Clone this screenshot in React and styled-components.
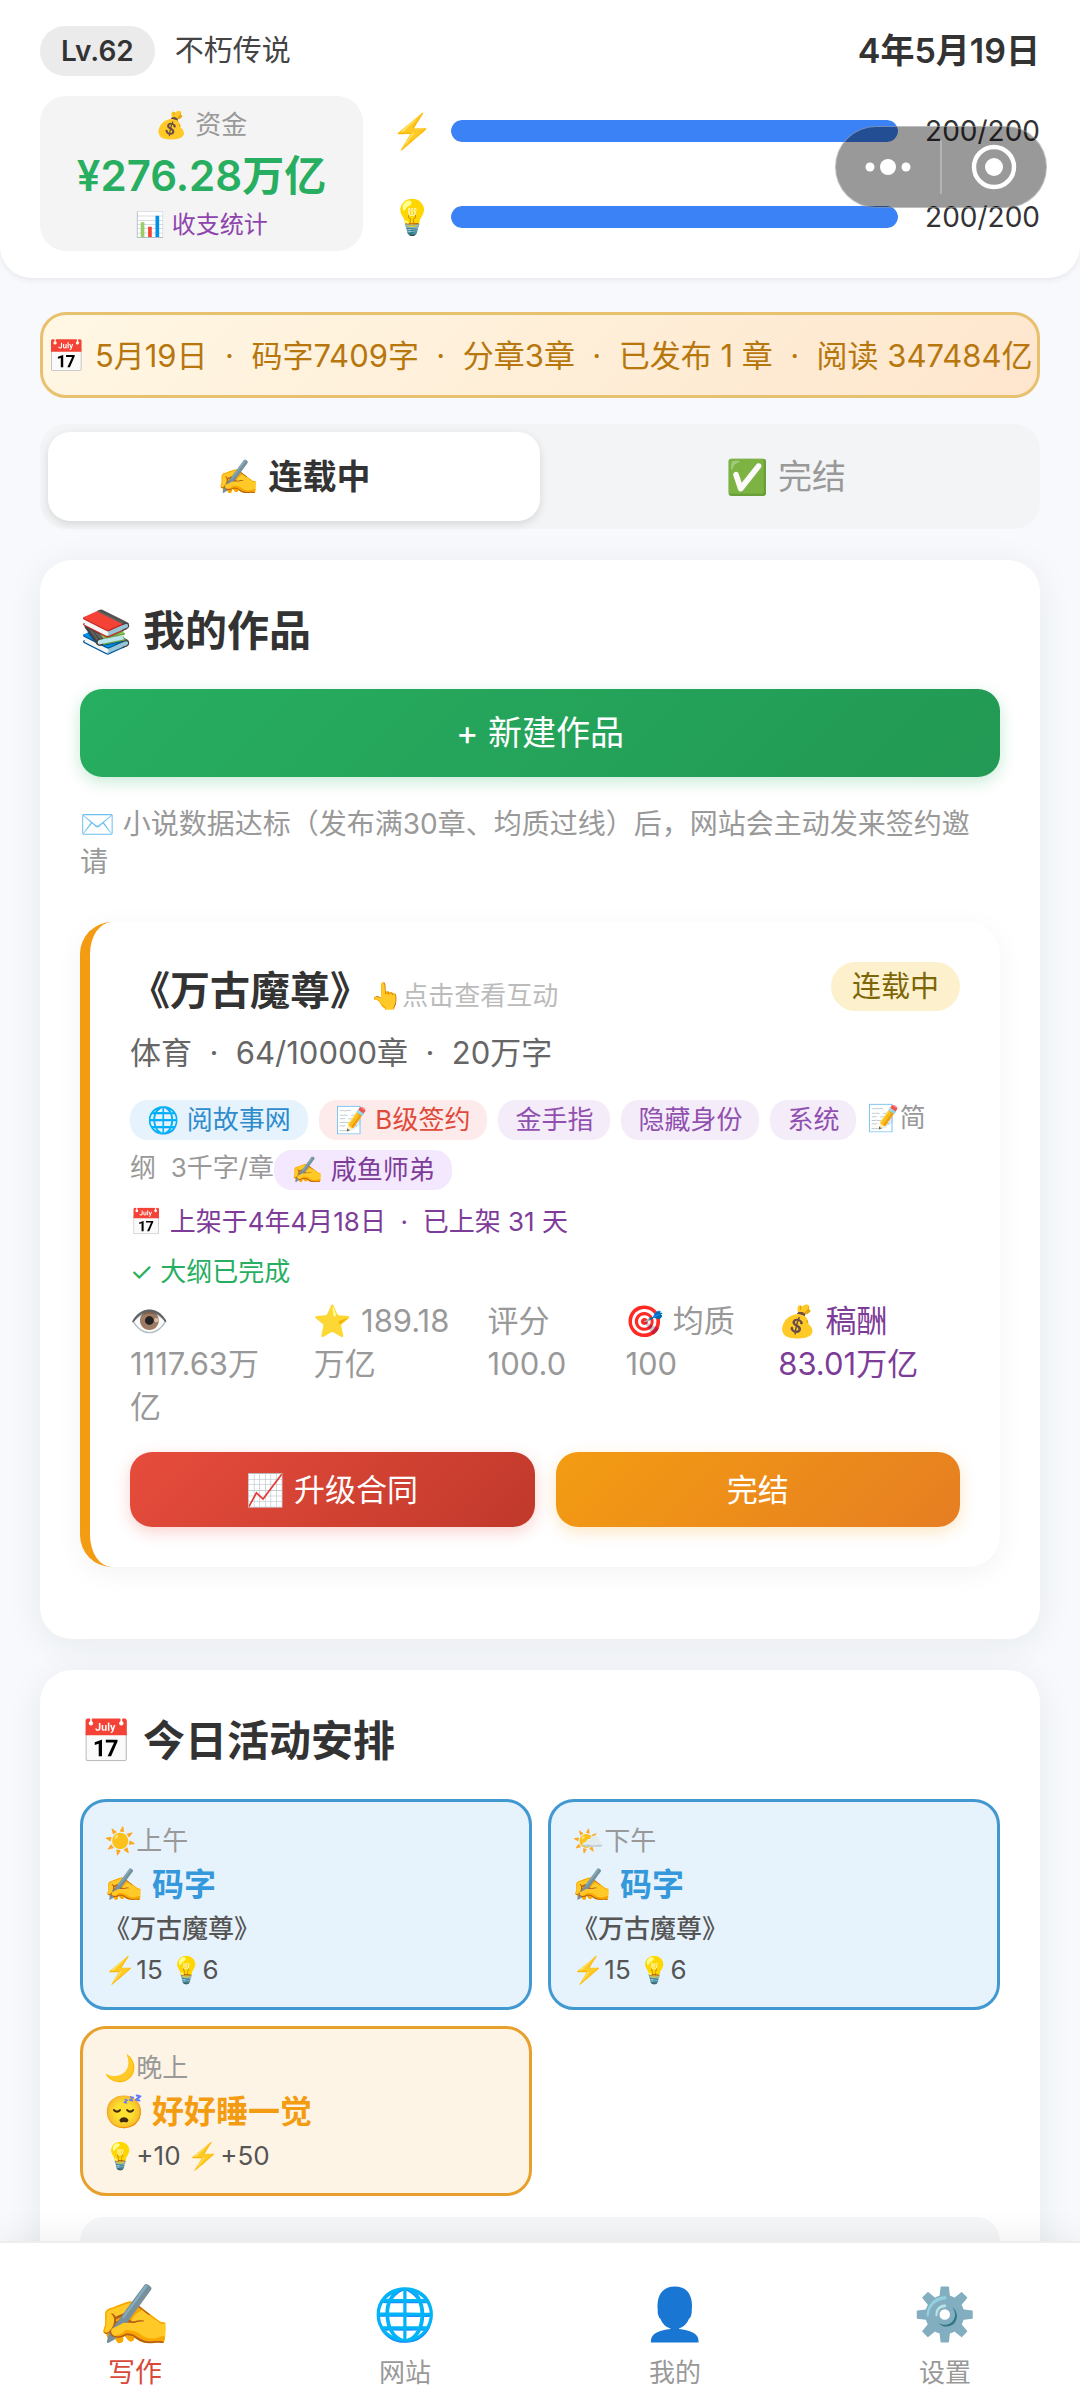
import React, { useState } from 'react';
import styled, { createGlobalStyle, css } from 'styled-components';

const GlobalStyle = createGlobalStyle`
  *, *::before, *::after { box-sizing: border-box; }
  body {
    margin: 0;
    background: #f7f9fc;
    color: #333;
    font-family: Inter, "Noto Sans CJK SC", "Noto Color Emoji", sans-serif;
  }
  button { font-family: inherit; border: 0; padding: 0; background: none; cursor: pointer; }
  h2, h3, p, ul { margin: 0; padding: 0; }
`;

const Shell = styled.div`
  display: flex;
  flex-direction: column;
  height: 100vh;
  overflow: hidden;
`;

/* ---------- header ---------- */
const Header = styled.header`
  flex: none;
  display: flex;
  flex-direction: column;
  gap: 20px;
  padding: 26px 40px 27px;
  background: #fff;
  border-radius: 0 0 32px 32px;
  box-shadow: 0 2px 6px rgba(0, 0, 0, 0.07);
`;
const HeaderRow = styled.div`
  display: flex;
  align-items: center;
`;
const Level = styled.span`
  padding: 0 21px;
  border-radius: 25px;
  background: #ebebeb;
  font-size: 28px;
  line-height: 50px;
  font-weight: 600;
`;
const Rank = styled.span`
  margin-left: 20px;
  font-size: 29px;
  line-height: 50px;
  color: #444;
`;
const Today = styled.time`
  margin-left: auto;
  font-size: 34px;
  line-height: 50px;
  font-weight: 600;
`;
const HeaderStats = styled.div`
  display: flex;
  gap: 28px;
`;
const Funds = styled.div`
  flex: none;
  display: flex;
  flex-direction: column;
  align-items: center;
  justify-content: center;
  width: 323px;
  height: 155px;
  border-radius: 26px;
  background: #f4f4f4;
`;
const FundsLabel = styled.span`
  font-size: 26px;
  line-height: 42px;
  color: #999;
`;
const FundsValue = styled.strong`
  font-size: 42px;
  line-height: 60px;
  font-weight: 600;
  color: #27ae60;
`;
const FundsLink = styled.button`
  font-size: 24px;
  line-height: 38px;
  color: #8e44ad;
`;
const Meters = styled.div`
  flex: 1;
  display: flex;
  flex-direction: column;
  justify-content: space-between;
  padding: 13px 0 12px;
`;
const MeterRow = styled.div`
  display: flex;
  align-items: center;
  height: 44px;
`;
const MeterIcon = styled.span`
  width: 60px;
  font-size: 34px;
  line-height: 44px;
`;
const Track = styled.div`
  flex: 1;
  height: 22px;
  border-radius: 11px;
  background: #eee;
  overflow: hidden;
`;
const Fill = styled.div`
  height: 100%;
  border-radius: 11px;
  background: #3b82f6;
`;
const MeterValue = styled.span`
  width: 142px;
  text-align: right;
  font-size: 28px;
  line-height: 44px;
`;

/* ---------- floating host menu ---------- */
const Capsule = styled.div`
  position: fixed;
  top: 126px;
  right: 33px;
  z-index: 5;
  display: flex;
  align-items: center;
  width: 212px;
  height: 82px;
  border: 1px solid rgba(255, 255, 255, 0.35);
  border-radius: 41px;
  background: rgba(0, 0, 0, 0.4);
`;
const CapsuleButton = styled.button`
  flex: 1;
  display: flex;
  align-items: center;
  justify-content: center;
  height: 100%;
`;
const CapsuleRule = styled.span`
  width: 2px;
  height: 54px;
  background: rgba(255, 255, 255, 0.25);
`;

/* ---------- body ---------- */
const Main = styled.main`
  flex: 1;
  min-height: 0;
  overflow: hidden;
  padding: 34px 40px 0;
`;
const Banner = styled.p`
  display: flex;
  align-items: center;
  justify-content: center;
  height: 86px;
  padding-bottom: 4px;
  border: 3px solid #e8c16f;
  border-radius: 26px;
  background: linear-gradient(135deg, #fff7e4, #fee6cd);
  color: #b7770d;
  font-size: 31px;
  white-space: pre;
`;
const Tabs = styled.div`
  display: flex;
  margin-top: 26px;
  padding: 8px;
  border-radius: 26px;
  background: #f3f4f5;
`;
const Tab = styled.button`
  flex: 1;
  border-radius: 22px;
  font-size: 34px;
  line-height: 89px;
  color: ${(p) => (p.$active ? '#333' : '#999')};
  font-weight: ${(p) => (p.$active ? 600 : 400)};
  ${(p) => p.$active && css`
    background: #fff;
    box-shadow: 0 3px 8px rgba(0, 0, 0, 0.12);
  `}
`;
const Card = styled.section`
  margin-top: 31px;
  padding: 40px;
  border-radius: 32px;
  background: #fff;
  box-shadow: 0 6px 36px rgba(30, 40, 60, 0.07);
`;
const CardTitle = styled.h2`
  margin-bottom: 28px;
  font-size: 42px;
  line-height: 61px;
  font-weight: 600;
`;
const tones = {
  green: ['#27ae60, #229954', 'rgba(39, 174, 96, 0.25)'],
  red: ['#e74c3c, #c0392b', 'rgba(231, 76, 60, 0.25)'],
  orange: ['#f39c12, #e67e22', 'rgba(243, 156, 18, 0.25)'],
};
const Action = styled.button`
  flex: 1;
  width: 100%;
  border-radius: 22px;
  background: linear-gradient(135deg, ${(p) => tones[p.$tone][0]});
  box-shadow: 0 5px 16px ${(p) => tones[p.$tone][1]};
  color: #fff;
  font-size: ${(p) => (p.$large ? 34 : 31)}px;
  line-height: ${(p) => (p.$large ? 88 : 75)}px;
`;
const Note = styled.p`
  margin-top: 28px;
  padding-right: 12px;
  font-size: 28px;
  line-height: 38px;
  color: #999;
`;

/* ---------- book ---------- */
const Book = styled.article`
  margin: 41px 0 32px;
  padding: 40px;
  border-left: 10px solid #f39c12;
  border-radius: 32px;
  background: #fff;
  box-shadow: 0 6px 28px rgba(0, 0, 0, 0.05);
`;
const BookHead = styled.div`
  display: flex;
  justify-content: space-between;
  align-items: flex-start;
`;
const BookTitle = styled.h3`
  font-size: 40px;
  line-height: 58px;
  font-weight: 600;
`;
const Hint = styled.span`
  font-size: 26px;
  font-weight: 400;
  color: #bbb;
`;
const Status = styled.span`
  padding: 0 21px;
  border-radius: 25px;
  background: #fdf1cd;
  color: #7d6608;
  font-size: 29px;
  line-height: 49px;
`;
const Meta = styled.p`
  margin-top: 6px;
  font-size: 31px;
  line-height: 44px;
  color: #666;
  white-space: pre-wrap;
`;
const TagFlow = styled.div`
  margin-top: 18px;
  padding-right: 24px;
  font-size: 26px;
  line-height: 50px;
  color: #999;
`;
const tagColors = {
  site: ['#e6f3fc', '#2e8bcc'],
  deal: ['#fdeaea', '#e04a3a'],
  trope: ['#f4ecf8', '#9150b0'],
  author: ['#f3e8fd', '#7d3c98'],
};
const Tag = styled.span`
  display: inline-block;
  vertical-align: middle;
  margin-right: ${(p) => (p.$last ? 0 : 11)}px;
  padding: 0 17px;
  border-radius: 18px;
  line-height: 40px;
  background: ${(p) => tagColors[p.$kind][0]};
  color: ${(p) => tagColors[p.$kind][1]};
`;
const Fact = styled.p`
  margin-top: 8px;
  font-size: 26px;
  line-height: 42px;
  color: ${(p) => (p.$done ? '#27ae60' : '#7d3c98')};
  white-space: pre-wrap;
`;
const Stats = styled.ul`
  display: grid;
  grid-template-columns: 184fr 174fr 138fr 153fr 182fr;
  margin: 6px 0 24px;
  list-style: none;
`;
const Stat = styled.li`
  padding-right: ${(p) => (p.$narrow ? 48 : 24)}px;
  font-size: 31px;
  line-height: 43px;
  color: ${(p) => (p.$pay ? '#7d3c98' : '#999')};
`;
const Actions = styled.div`
  display: flex;
  gap: 21px;
`;

/* ---------- schedule ---------- */
const Schedule = styled.div`
  display: grid;
  grid-template-columns: 1fr 1fr;
  gap: 16px;
`;
const Slot = styled.article`
  padding: 18px 21px 17px;
  border: 3px solid ${(p) => (p.$rest ? '#e8a02c' : '#4298d0')};
  border-radius: 26px;
  background: ${(p) => (p.$rest ? '#fef4e5' : '#e6f3fd')};
  color: ${(p) => (p.$rest ? '#f39c12' : '#3498db')};
`;
const SlotText = styled.p`
  font-size: 26px;
  line-height: 41px;
  color: ${(p) => (p.$muted ? '#999' : '#555')};
  font-weight: ${(p) => (p.$strong ? 500 : 400)};
`;
const SlotName = styled.h3`
  font-size: 32px;
  line-height: 47px;
  font-weight: 600;
`;
const Panel = styled.div`
  height: 120px;
  margin-top: 21px;
  border-radius: 24px;
  background: #f5f6f8;
`;

/* ---------- bottom navigation ---------- */
const Nav = styled.nav`
  flex: none;
  position: relative;
  display: flex;
  height: 160px;
  padding-top: 34px;
  border-top: 2px solid #eee;
  background: #fff;
  box-shadow: 0 -6px 30px rgba(0, 0, 0, 0.06);
`;
const NavItem = styled.button`
  flex: 1;
  display: flex;
  flex-direction: column;
  align-items: center;
  font-size: ${(p) => (p.$active ? 27 : 26)}px;
  line-height: 36px;
  color: ${(p) => (p.$active ? '#d9493a' : '#999')};
`;
const NavIcon = styled.span`
  margin-bottom: 4px;
  font-size: ${(p) => (p.$active ? 60 : 51)}px;
  line-height: 74px;
`;

const slots = [
  { time: '☀️上午', name: '✍️ 码字', book: '《万古魔尊》', cost: '⚡15 💡6' },
  { time: '🌤️下午', name: '✍️ 码字', book: '《万古魔尊》', cost: '⚡15 💡6' },
  { time: '🌙晚上', name: '😴 好好睡一觉', cost: '💡+10 ⚡+50', rest: true },
];
const navItems = [
  ['✍️', '写作'],
  ['🌐', '网站'],
  ['👤', '我的'],
  ['⚙️', '设置'],
];
const tabItems = ['✍️ 连载中', '✅ 完结'];

function Meter({ icon, value, max }) {
  return (
    <MeterRow>
      <MeterIcon>{icon}</MeterIcon>
      <Track>
        <Fill style={{ width: `${(value / max) * 100}%` }} />
      </Track>
      <MeterValue>{value}/{max}</MeterValue>
    </MeterRow>
  );
}

export default function App() {
  const [tab, setTab] = useState(0);
  const [page, setPage] = useState(0);
  return (
    <Shell>
      <GlobalStyle />
      <Header>
        <HeaderRow>
          <Level>Lv.62</Level>
          <Rank>不朽传说</Rank>
          <Today>4年5月19日</Today>
        </HeaderRow>
        <HeaderStats>
          <Funds>
            <FundsLabel>💰 资金</FundsLabel>
            <FundsValue>¥276.28万亿</FundsValue>
            <FundsLink>📊 收支统计</FundsLink>
          </Funds>
          <Meters>
            <Meter icon="⚡" value={200} max={200} />
            <Meter icon="💡" value={200} max={200} />
          </Meters>
        </HeaderStats>
      </Header>

      <Capsule>
        <CapsuleButton aria-label="更多">
          <svg width="46" height="18" viewBox="0 0 46 18" fill="#fff">
            <circle cx="5" cy="9" r="4.5" />
            <circle cx="23" cy="9" r="8" />
            <circle cx="41" cy="9" r="4.5" />
          </svg>
        </CapsuleButton>
        <CapsuleRule />
        <CapsuleButton aria-label="关闭">
          <svg width="46" height="46" viewBox="0 0 46 46">
            <circle cx="23" cy="23" r="20" fill="none" stroke="#fff" strokeWidth="4.4" />
            <circle cx="23" cy="23" r="9" fill="#fff" />
          </svg>
        </CapsuleButton>
      </Capsule>

      <Main>
        <Banner>📅 5月19日  ·  码字7409字  ·  分章3章  ·  已发布 1 章  ·  阅读 347484亿</Banner>
        <Tabs role="tablist">
          {tabItems.map((label, i) => (
            <Tab key={label} role="tab" aria-selected={tab === i} $active={tab === i} onClick={() => setTab(i)}>
              {label}
            </Tab>
          ))}
        </Tabs>

        <Card>
          <CardTitle>📚 我的作品</CardTitle>
          <Action $tone="green" $large>+ 新建作品</Action>
          <Note>✉️ 小说数据达标（发布满30章、均质过线）后，网站会主动发来签约邀请</Note>
          <Book>
            <BookHead>
              <BookTitle>《万古魔尊》<Hint>👆点击查看互动</Hint></BookTitle>
              <Status>连载中</Status>
            </BookHead>
            <Meta>体育  ·  64/10000章  ·  20万字</Meta>
            <TagFlow>
              <Tag $kind="site">🌐 阅故事网</Tag>
              <Tag $kind="deal">📝 B级签约</Tag>
              <Tag $kind="trope">金手指</Tag>
              <Tag $kind="trope">隐藏身份</Tag>
              <Tag $kind="trope">系统</Tag>
              <span>📝简</span><span>纲&nbsp; 3千字/章</span><Tag $kind="author" $last>✍️ 咸鱼师弟</Tag>
            </TagFlow>
            <Fact>📅 上架于4年4月18日  ·  已上架 31 天</Fact>
            <Fact $done>✓ 大纲已完成</Fact>
            <Stats>
              <Stat $narrow>👁️ 1117.63万亿</Stat>
              <Stat>⭐ 189.18万亿</Stat>
              <Stat>评分 100.0</Stat>
              <Stat>🎯 均质 100</Stat>
              <Stat $pay>💰 稿酬 83.01万亿</Stat>
            </Stats>
            <Actions>
              <Action $tone="red">📈 升级合同</Action>
              <Action $tone="orange">完结</Action>
            </Actions>
          </Book>
        </Card>

        <Card>
          <CardTitle>📅 今日活动安排</CardTitle>
          <Schedule>
            {slots.map((s) => (
              <Slot key={s.time} $rest={s.rest}>
                <SlotText $muted>{s.time}</SlotText>
                <SlotName>{s.name}</SlotName>
                {s.book && <SlotText $strong>{s.book}</SlotText>}
                <SlotText>{s.cost}</SlotText>
              </Slot>
            ))}
          </Schedule>
          <Panel />
        </Card>
      </Main>

      <Nav>
        {navItems.map(([icon, label], i) => (
          <NavItem key={label} $active={page === i} onClick={() => setPage(i)}>
            <NavIcon $active={page === i}>{icon}</NavIcon>
            {label}
          </NavItem>
        ))}
      </Nav>
    </Shell>
  );
}
